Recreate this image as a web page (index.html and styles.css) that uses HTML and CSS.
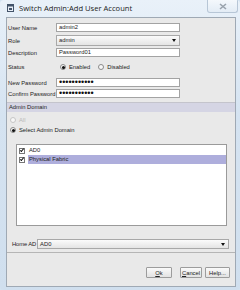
FILE: index.html
```html
<!DOCTYPE html>
<html lang="en">
<head>
    <meta charset="UTF-8">
    <title>Switch Admin:Add User Account</title>
    <link rel="stylesheet" href="styles.css">
</head>
<body>
<div class="window">
    <div class="titlebar">
        <svg class="app-icon" width="7" height="8" viewBox="0 0 7 8">
            <rect x="0.5" y="0.5" width="6" height="7" fill="#e8eef6" stroke="#44546a"/>
            <rect x="0.5" y="0.5" width="6" height="2" fill="#44546a"/>
            <rect x="2" y="4" width="3" height="2" fill="#44546a"/>
        </svg>
        <span class="title">Switch Admin:Add User Account</span>
        <div class="close">
            <svg width="8" height="7" viewBox="0 0 8 7">
                <path d="M1 1 L7 6 M7 1 L1 6" stroke="#9aa3ad" stroke-width="1.6"/>
            </svg>
        </div>
    </div>

    <div class="content">
        <div class="form">
            <div class="row">
                <span class="label">User Name</span>
                <div class="field">admin2</div>
            </div>
            <div class="row role">
                <span class="label">Role</span>
                <div class="combo">admin<span class="arrow"></span></div>
            </div>
            <div class="row desc">
                <span class="label">Description</span>
                <div class="field">Password01</div>
            </div>
            <div class="row status">
                <span class="label">Status</span>
                <span class="radio on"></span><span class="opt-text">Enabled</span>
                <span class="radio"></span><span class="opt-text">Disabled</span>
            </div>
            <div class="row newpw">
                <span class="label">New Password</span>
                <div class="field pw">•••••••••••</div>
            </div>
            <div class="row confirm">
                <span class="label">Confirm Password</span>
                <div class="field pw">•••••••••••</div>
            </div>
        </div>

        <div class="domain">
            <div class="domain-head">Admin Domain</div>
            <div class="choice disabled"><span class="radio"></span>All</div>
            <div class="choice"><span class="radio on"></span>Select Admin Domain</div>
            <div class="list">
                <div class="item"><span class="check"></span><span class="name">AD0</span></div>
                <div class="item selected"><span class="check"></span><span class="name">Physical Fabric</span></div>
            </div>
            <div class="home">
                <span class="home-label">Home AD</span>
                <div class="combo">AD0<span class="arrow"></span></div>
            </div>
        </div>

        <div class="buttons">
            <button class="btn ok"><u>O</u>k</button>
            <button class="btn cancel"><u>C</u>ancel</button>
            <button class="btn help">Help...</button>
        </div>
    </div>
</div>
</body>
</html>
```

FILE: styles.css
```css
body {
    margin: 0;
    background-color: #d3e2f0;
    font-family: "Liberation Sans", Arial, sans-serif;
}
.window {
    width: 240px;
    height: 290px;
    background: linear-gradient(to bottom, #e9f1f9, #d5e3f1 40%, #d0dfee);
    border-radius: 4px;
    overflow: hidden;
}
.titlebar {
    height: 17px;
    display: flex;
    align-items: flex-start;
}
.app-icon {
    margin: 4px 0 0 7px;
}
.title {
    margin: 3px 0 0 5px;
    font-family: "Open Sans", "Liberation Sans", sans-serif;
    font-size: 7.6px;
    color: #1b1b1b;
    flex: 1;
}
.close {
    width: 29px;
    height: 12px;
    margin-right: 2px;
    border: 1px solid #b7c6d6;
    border-top: none;
    border-radius: 0 0 3px 3px;
    background: linear-gradient(to bottom, #f4f8fc, #e3ecf5);
    display: flex;
    align-items: center;
    justify-content: center;
}
.content {
    margin: 0 4px 0 6px;
    height: 270px;
    box-sizing: border-box;
    background-color: #e9e9e9;
    border: 1px solid #9fa9b4;
    font-size: 5.8px;
    color: #222;
}
.form {
    padding: 5px 0 0 1px;
}
.row {
    display: flex;
    align-items: center;
    height: 9px;
    white-space: nowrap;
}
.label {
    width: 48px;
    flex-shrink: 0;
}
.field {
    width: 124px;
    height: 9px;
    box-sizing: border-box;
    background: #fff;
    border: 1px solid #a3a3a3;
    padding-left: 2px;
    line-height: 7px;
    overflow: hidden;
}
.pw {
    font-size: 9px;
    letter-spacing: 0;
    line-height: 7px;
    color: #111;
}
.role {
    margin-top: 3px;
    height: 11px;
}
.combo {
    position: relative;
    width: 124px;
    height: 11px;
    box-sizing: border-box;
    background: linear-gradient(to bottom, #fbfbfb, #e4e4e4);
    border: 1px solid #a8a8a8;
    padding-left: 2px;
    line-height: 9px;
}
.arrow {
    position: absolute;
    right: 3px;
    top: 3px;
    border-left: 2.5px solid transparent;
    border-right: 2.5px solid transparent;
    border-top: 3px solid #111;
}
.desc {
    margin-top: 2px;
}
.status {
    margin-top: 5px;
    height: 10px;
}
.radio {
    width: 4px;
    height: 4px;
    border: 1px solid #8a8a8a;
    border-radius: 50%;
    background: #f7f7f7;
    position: relative;
    flex-shrink: 0;
}
.radio.on::after {
    content: "";
    position: absolute;
    left: 0.5px;
    top: 0.5px;
    width: 3px;
    height: 3px;
    border-radius: 50%;
    background: #111;
}
.status .radio {
    margin-left: 4px;
}
.opt-text {
    margin-left: 3px;
    margin-right: 4px;
}
.newpw {
    margin-top: 6px;
}
.confirm {
    margin-top: 2px;
}
.domain {
    margin-top: 4px;
    height: 151px;
    box-sizing: border-box;
    border-top: 1px solid #c4c4cc;
    border-bottom: 1px solid #b5b5b5;
}
.domain-head {
    height: 9px;
    line-height: 9px;
    padding-left: 2px;
    background: #d5d5e4;
}
.choice {
    display: flex;
    align-items: center;
    height: 10px;
    padding-left: 3px;
    gap: 3px;
}
.domain-head + .choice {
    margin-top: 3px;
}
.choice.disabled {
    color: #b8b8b8;
}
.choice.disabled .radio {
    border-color: #c6c6c6;
}
.list {
    margin: 9px 0 0 9px;
    width: 211px;
    height: 82px;
    box-sizing: border-box;
    background: #fff;
    border: 1px solid #9a9a9a;
    padding-top: 1px;
}
.item {
    display: flex;
    align-items: center;
    height: 9px;
}
.check {
    width: 4px;
    height: 4px;
    margin: 0 3px 0 2px;
    border: 1px solid #777;
    background: #fff;
    position: relative;
    flex-shrink: 0;
}
.check::after {
    content: "";
    position: absolute;
    left: 1px;
    top: -0.5px;
    width: 1.3px;
    height: 2.8px;
    border-right: 1px solid #111;
    border-bottom: 1px solid #111;
    transform: rotate(40deg);
}
.name {
    flex: 1;
    height: 9px;
    line-height: 9px;
    padding-left: 1px;
}
.selected .name {
    background: #aeaedc;
}
.home {
    display: flex;
    align-items: center;
    margin: 13px 6px 0 5px;
    white-space: nowrap;
}
.home-label {
    margin-right: 1px;
    letter-spacing: -0.1px;
}
.home .combo {
    flex: 1;
    height: 10px;
    line-height: 8px;
}
.buttons {
    display: flex;
    justify-content: flex-end;
    margin-top: 14px;
    padding-right: 5px;
}
.btn {
    height: 11px;
    padding: 0;
    font-family: "Liberation Sans", Arial, sans-serif;
    font-size: 5.8px;
    color: #222;
    background: linear-gradient(to bottom, #fafafa, #e2e2e2);
    border: 1px solid #9c9c9c;
    border-radius: 1px;
}
.ok {
    width: 26px;
    margin-right: 8px;
}
.cancel {
    width: 22px;
    margin-right: 3px;
}
.help {
    width: 25px;
}
```
